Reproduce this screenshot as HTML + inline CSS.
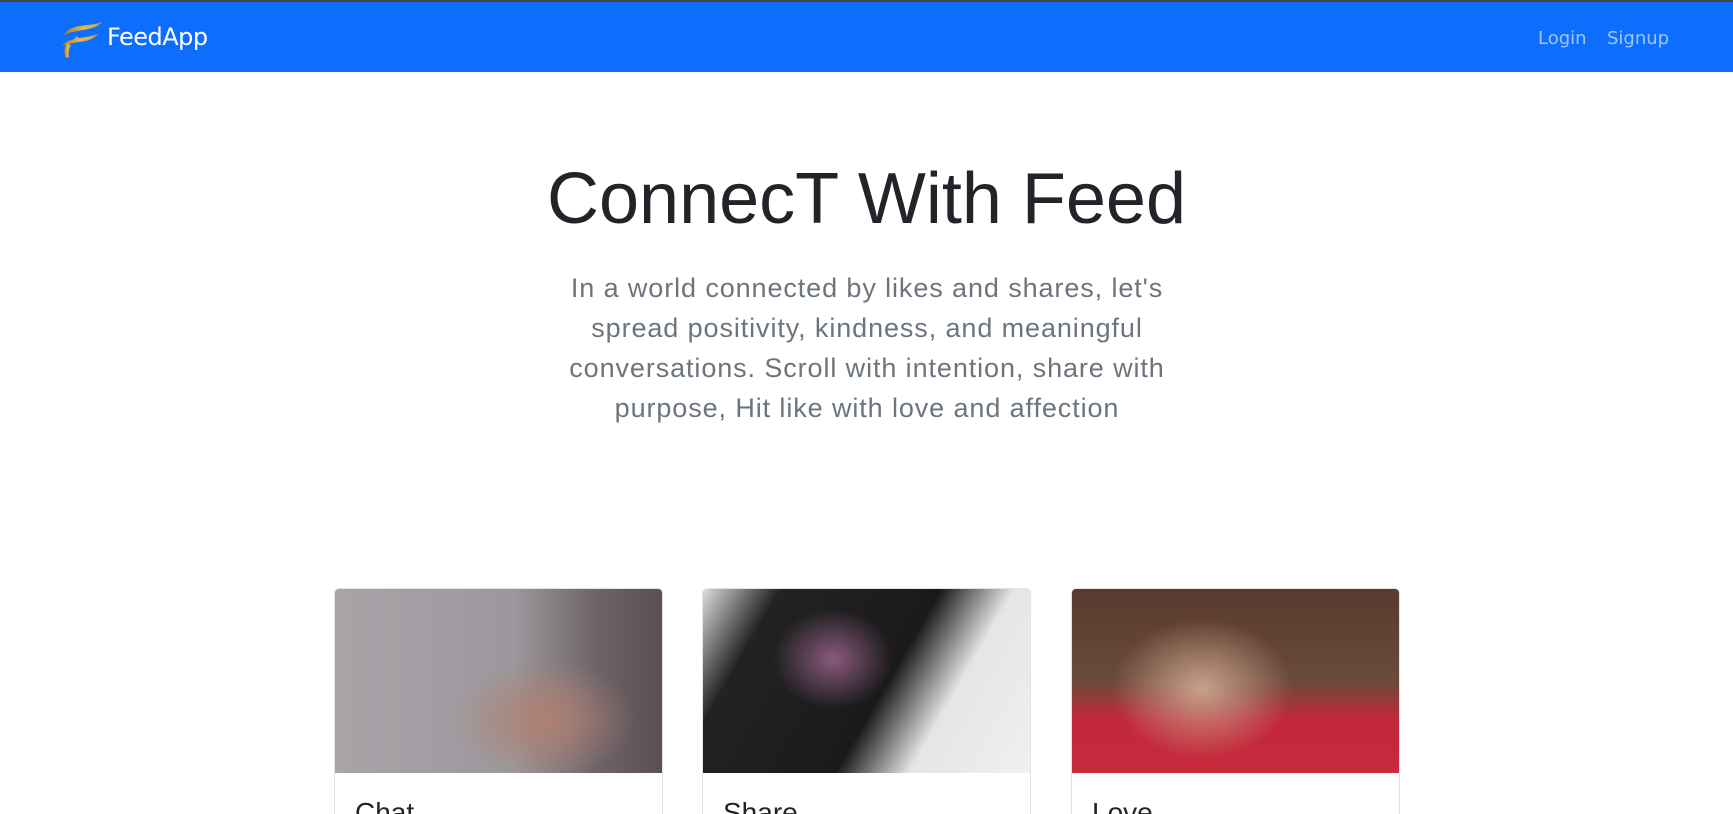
<!DOCTYPE html>
<html style="height:814px;overflow:hidden"><head><meta charset="utf-8"><style>
*{margin:0;padding:0;box-sizing:border-box}
body{width:1733px;height:814px;overflow:hidden;background:#fff;font-family:"Liberation Sans",sans-serif;position:relative}
.nav{position:absolute;left:0;top:0;width:1733px;height:72px;background:#0d6efd;border-top:2px solid #444}
.brand{position:absolute;left:107px;top:21px;color:#fff;font-family:"DejaVu Sans",sans-serif;font-size:24px;letter-spacing:-0.5px}
.links{position:absolute;top:26px;font-family:"DejaVu Sans",sans-serif;font-size:18px;color:rgba(255,255,255,.6)}
h1{position:absolute;left:0;width:1733px;top:158px;text-align:center;font-weight:400;font-size:72px;color:#212529}
p.lead{position:absolute;left:551px;width:632px;top:268px;text-align:center;font-size:27px;line-height:40px;color:#6c757d;letter-spacing:0.9px}
.card{position:absolute;top:588px;width:329px;height:226px;border:1px solid #e3e3e3;border-bottom:none;border-radius:5px 5px 0 0;overflow:hidden}
.img{height:184px}
.card h5{position:absolute;left:20px;top:208px;font-size:28px;font-weight:400;color:#212529}
</style></head><body>
<div class="nav">
<svg style="position:absolute;left:60px;top:17px" width="43" height="40" viewBox="0 0 43 40">
<defs><linearGradient id="g" x1="0" x2="1"><stop offset="0" stop-color="#9a7a2c"/><stop offset=".5" stop-color="#e0b957"/><stop offset="1" stop-color="#c8a04a"/></linearGradient></defs>
<path d="M4 16 C10 4 30 8 42 3 C34 12 20 10 9 14 Z" fill="url(#g)"/>
<path d="M2 27 C8 18 24 20 38 15 C30 24 18 22 9 25 Z" fill="url(#g)"/>
<path d="M7 24 C3 30 4 35 6 39 L9 38 C8 34 9 30 11 26 Z" fill="url(#g)"/>
<path d="M14 20 L17 17 L19 20 Z" fill="url(#g)"/>
</svg>
<div class="brand">FeedApp</div>
<div class="links" style="left:1538px">Login</div>
<div class="links" style="left:1607px">Signup</div>
</div>
<h1>ConnecT With Feed</h1>
<p class="lead">In a world connected by likes and shares, let's spread positivity, kindness, and meaningful conversations. Scroll with intention, share with purpose, Hit like with love and affection</p>
<div class="card" style="left:334px"><div class="img" style="background:radial-gradient(ellipse 90px 60px at 210px 130px,#b08070,transparent),linear-gradient(90deg,#a8a4a8,#9c979c 55%,#6d6469 80%,#5a5054)"></div><h5>Chat</h5></div>
<div class="card" style="left:702px"><div class="img" style="background:radial-gradient(ellipse 60px 50px at 130px 70px,#8a5a80,transparent),linear-gradient(120deg,#ddd 0%,#222 18%,#1a1a1a 55%,#e5e5e5 72%,#f0f0f0)"></div><h5>Share</h5></div>
<div class="card" style="left:1071px"><div class="img" style="background:radial-gradient(ellipse 90px 70px at 130px 100px,#c8a08a,transparent),linear-gradient(180deg,#5a3a2e 0%,#6a4a3a 50%,#c0283a 70%,#c82a3c)"></div><h5>Love</h5></div>
</body></html>
